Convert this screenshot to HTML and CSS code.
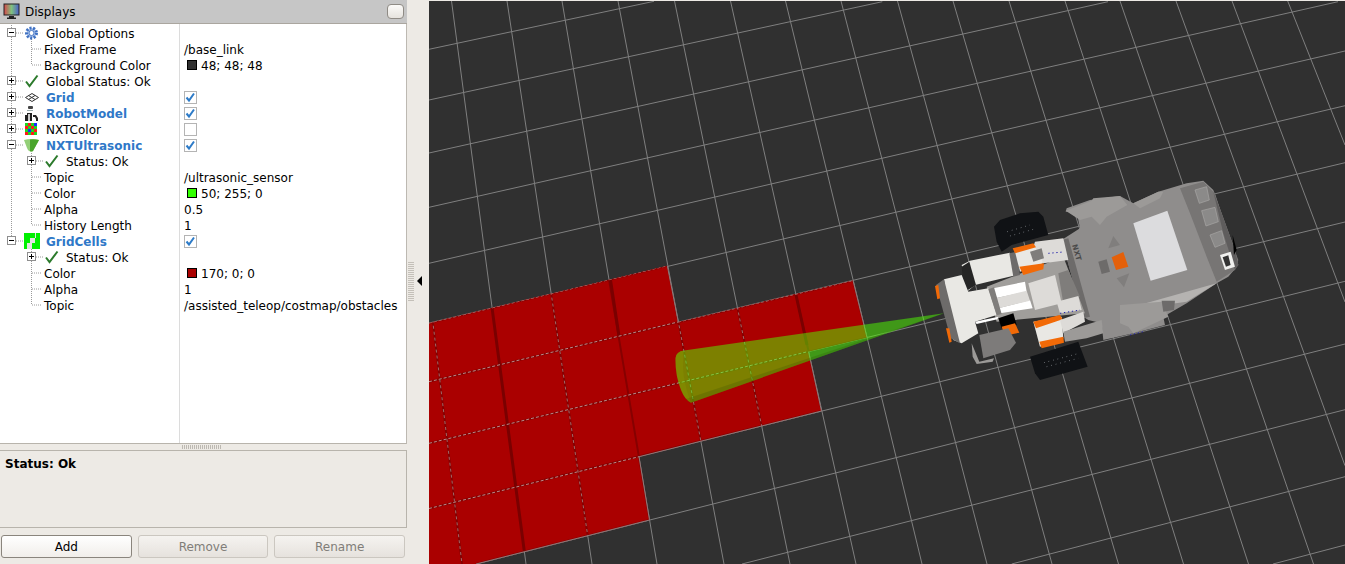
FILE: index.html
```html
<!DOCTYPE html>
<html lang="en">
<head>
<meta charset="utf-8">
<title>Displays</title>
<link rel="stylesheet" href="styles.css">
</head>
<body>
<div class="app">
  <aside class="sidebar">
    <header class="titlebar">
      <svg class="monitor" width="17" height="17" viewBox="0 0 17 17">
        <defs><linearGradient id="rainbow" x1="0" x2="1" y1="0" y2="0"><stop offset="0" stop-color="#d8474a"/><stop offset=".5" stop-color="#7fc27f"/><stop offset="1" stop-color="#4a5fc8"/></linearGradient></defs>
        <rect x="1" y="1" width="15" height="11" fill="url(#rainbow)" stroke="#222"/>
        <path d="M6 13h5v1.500h2V16H4v-1.500h2z" fill="#222"/>
      </svg>
      <span class="title">Displays</span>
      <span class="float-btn"></span>
    </header>

    <div class="tree">
      <svg class="guides" width="180" height="419" viewBox="0 24 180 419">
        <g class="dots">
          <path d="M11.500 25V237M31.500 39V65M31.500 153V225M31.500 249V305"/>
          <path d="M16 33H23M16 81H23M16 97H23M16 113H23M16 129H23M16 145H23M16 241H23"/>
          <path d="M32 49H42M32 65H42M36 161H43M32 177H42M32 193H42M32 209H42M32 225H42M36 257H43M32 273H42M32 289H42M32 305H42"/>
        </g>
        <g class="exp-box">
          <rect x="7.500" y="28.500" width="8" height="8"/><rect x="7.500" y="76.500" width="8" height="8"/><rect x="7.500" y="92.500" width="8" height="8"/><rect x="7.500" y="108.500" width="8" height="8"/><rect x="7.500" y="124.500" width="8" height="8"/><rect x="7.500" y="140.500" width="8" height="8"/><rect x="7.500" y="236.500" width="8" height="8"/><rect x="27.500" y="156.500" width="8" height="8"/><rect x="27.500" y="252.500" width="8" height="8"/>
        </g>
        <path class="exp-sign" d="M9 32.500h5M9 80.500h5M11.500 78v5M9 96.500h5M11.500 94v5M9 112.500h5M11.500 110v5M9 128.500h5M11.500 126v5M9 144.500h5M9 240.500h5M29 160.500h5M31.500 158v5M29 256.500h5M31.500 254v5"/>

        <circle class="gear-teeth" cx="31.500" cy="33" r="5"/>
        <circle class="gear-hub" cx="31.500" cy="33" r="2.500"/>

        <path class="check" d="M26 81.500l3.500 4.500L37.500 75.500"/>
        <path class="check" d="M46 161.500l3.500 4.500L57.500 155.500"/>
        <path class="check" d="M46 257.500l3.500 4.500L57.500 251.500"/>

        <path class="grid-icon" d="M25.500 97.500L32 93.500L38.500 97.500L32 101.500ZM28.500 95.500L35 99.500M35 95.500L28.500 99.500"/>

        <g>
          <rect x="28" y="106" width="5" height="3" rx="1" fill="#444"/>
          <rect x="27" y="110" width="6" height="1" fill="#9aa"/>
          <path d="M25 121v-6h2v-2h5v8zM33 115h3l2 3v3h-2v-2l-1-2h-2z" fill="#222"/>
          <path d="M28 114h2v7h-2z" fill="#ccc"/>
        </g>

        <g>
          <path class="c-g" d="M25 123h3v3h-3zM31 123h3v3h-3zM28 126h3v3h-3zM34 126h3v3h-3zM25 129h3v3h-3zM31 129h3v3h-3zM28 132h3v3h-3zM34 132h3v3h-3z"/>
          <path class="c-r" d="M28 123h3v3h-3zM25 126h3v3h-3zM31 126h3v3h-3zM34 129h3v3h-3zM25 132h3v3h-3zM31 132h3v3h-3z"/>
          <path class="c-b" d="M34 123h3v3h-3zM28 129h3v3h-3z"/>
        </g>

        <path class="cone-l" d="M24 140Q31 138 39 140L33 151Q29 153 27 148Z"/>
        <path class="cone-d" d="M30 139.500Q35 139 39 140L33 151Q31 152 30 151Z"/>

        <rect class="cells-bg" x="24" y="233" width="16" height="16"/>
        <path class="cells" d="M24 233h11v5H24zM36 233h4v5h-4zM24 238h6v5h-6zM35 238h5v5h-5zM24 243h3v6h-3zM32 243h8v6h-8z"/>
      </svg>

      <div class="row"><span class="name l0">Global Options</span></div>
      <div class="row"><span class="name l1">Fixed Frame</span><span class="val">/base_link</span></div>
      <div class="row"><span class="name l1">Background Color</span><span class="val"><i class="swatch sw-dark"></i>48; 48; 48</span></div>
      <div class="row"><span class="name l0">Global Status: Ok</span></div>
      <div class="row"><span class="name l0 on">Grid</span><span class="val"><i class="box"><svg width="13" height="13" viewBox="0 0 13 13"><path class="tick" d="M2.500 6.500l2.500 3L10 2.500"/></svg></i></span></div>
      <div class="row"><span class="name l0 on">RobotModel</span><span class="val"><i class="box"><svg width="13" height="13" viewBox="0 0 13 13"><path class="tick" d="M2.500 6.500l2.500 3L10 2.500"/></svg></i></span></div>
      <div class="row"><span class="name l0">NXTColor</span><span class="val"><i class="box"></i></span></div>
      <div class="row"><span class="name l0 on">NXTUltrasonic</span><span class="val"><i class="box"><svg width="13" height="13" viewBox="0 0 13 13"><path class="tick" d="M2.500 6.500l2.500 3L10 2.500"/></svg></i></span></div>
      <div class="row"><span class="name l2">Status: Ok</span></div>
      <div class="row"><span class="name l1">Topic</span><span class="val">/ultrasonic_sensor</span></div>
      <div class="row"><span class="name l1">Color</span><span class="val"><i class="swatch sw-green"></i>50; 255; 0</span></div>
      <div class="row"><span class="name l1">Alpha</span><span class="val">0.5</span></div>
      <div class="row"><span class="name l1">History Length</span><span class="val">1</span></div>
      <div class="row"><span class="name l0 on">GridCells</span><span class="val"><i class="box"><svg width="13" height="13" viewBox="0 0 13 13"><path class="tick" d="M2.500 6.500l2.500 3L10 2.500"/></svg></i></span></div>
      <div class="row"><span class="name l2">Status: Ok</span></div>
      <div class="row"><span class="name l1">Color</span><span class="val"><i class="swatch sw-red"></i>170; 0; 0</span></div>
      <div class="row"><span class="name l1">Alpha</span><span class="val">1</span></div>
      <div class="row"><span class="name l1">Topic</span><span class="val">/assisted_teleop/costmap/obstacles</span></div>
    </div>

    <div class="h-split"><span class="h-grip"></span></div>
    <div class="status"><b>Status: Ok</b></div>
    <div class="actions">
      <button class="btn btn-main" type="button">Add</button>
      <button class="btn" type="button" disabled>Remove</button>
      <button class="btn" type="button" disabled>Rename</button>
    </div>
  </aside>

  <div class="gutter">
    <span class="v-grip"></span>
    <span class="arrow"></span>
  </div>

  <main class="viewport">
    <svg class="scene" width="916" height="563" viewBox="429 1 916 563">
      <defs>
        <clipPath id="redclip"><path d="M429 323L667.300 265.700L678.300 322L853 280.500L867 337.600L808.500 351.600L821.500 411L639 456.700L649.500 520L476 564H429Z"/></clipPath>
      </defs>
      <rect x="429" y="1" width="916" height="563" class="bg"/>
      <g class="gridlines">
        <path d="M429 49.300L654 1.300M429 100L882.300 1.700M429 153L1108 1.700M429 207.300L1338 1.700M429 263.300L1345 51M429 323L1345 105.700M429 381.700L1345 162.700M429 443.300L1345 222M429 508.500L1345 281.300M476 564L1345 344M742 564L1345 409.700M1011.700 564L1345 476.700M1273 564L1345 545"/>
        <path d="M451.500 1L526 564M507 1L592 564M562 1L657 564M618 1L724 564M674.500 1L790 564M730.500 1L856 564M785.500 1L922 564M841 1L987 564M897.500 1L1052 564M953 1L1118.500 564M1009 1L1183.500 564M1065 1L1248.500 564M1120 1L1313.500 564M1176 1L1345 465.700M1232 1L1345 302M1287.700 1L1345 145"/>
      </g>
      <path class="red" d="M429 323L667.300 265.700L678.300 322L853 280.500L867 337.600L808.500 351.600L821.500 411L639 456.700L649.500 520L476 564H429Z"/>
      <g clip-path="url(#redclip)">
        <path class="seam" d="M429 323L667.300 265.700M678.300 322L853 280.500M429 381.700L853 280.500M429 443.300L867 337.600M429 508.500L821.500 411M476 564L649.500 520M562 1L657 564M618 1L724 564M674.500 1L790 564M507 1L592 564M429 290L462 564M785.500 1L922 564M730.500 1L856 564"/>
        <path class="seam-wide" d="M491 300L526 564M796 295L807 345M610.500 280L619 336"/>
        <path class="dash-h" d="M429 323L667.300 265.700M678.300 322L853 280.500M429 381.700L678 322M429 443.300L808 351.600M429 508.500L639 456.700"/>
        <path class="dash-v" d="M429 290L462 564M507 1L592 564M618 1L724 564M674.500 1L790 564"/>
      </g>
      <path class="edge" d="M639 456.700L821.500 411M476 564L649.500 520M667.300 265.700L678.300 322M853 280.500L867 337.600M808.500 351.600L821.500 411M639 456.700L649.500 520"/>

      <path class="cone" d="M944 313.300L684 350.500Q676 351.500 675.500 358Q675 375 681 390Q685 400 691 402.700Z"/>
      <path class="cone-band" d="M944 313.300L691 402.700Q688 401 686 399Z"/>
      <path class="cone-cap" d="M684 350.500Q676 351.500 675.500 358Q675 375 681 390Q685 400 691 402.700Q680 375 684 350.500Z"/>

      <g transform="translate(920 170) scale(.3333)">
        <path class="wheel" d="M222 170L240 150L300 130L355 125L370 140L385 195L275 225L245 245L230 215Z"/>
        <path class="wheel" d="M330 560L475 515L503 590L360 630L345 610Z"/>
        <path class="speck" d="M262 185L330 165M270 198L340 178M372 578L470 552M380 590L475 565"/>

        <path class="b-main" d="M425 210L480 175L470 125L437 125L440 115L510 90L600 78L640 100L715 65L800 40L850 32L880 60L905 130L945 240L955 285L925 320L890 340L800 400L765 420L730 440L735 465L640 490L550 510L545 460L505 450L490 440L450 300Z"/>
        <path class="b-light" d="M437 122L515 92L520 85L600 78L622 105L560 140L540 165L515 140L480 150Z"/>
        <path class="b-light" d="M640 100L715 65L730 65L720 85L660 115Z"/>
        <path class="b-band" d="M640 410L890 340L800 395L660 415Z"/>
        <path class="b-light" d="M600 405L725 395L745 440L640 490L625 470L600 460Z"/>
        <path class="b-dark" d="M725 392L765 392L762 420L730 425Z"/>
        <path class="b-dark" d="M425 210L445 205L510 440L490 445Z"/>
        <path class="b-panel" d="M780 55L850 35L885 70L910 150L955 270L945 300L890 335L860 260L810 130Z"/>
        <path class="b-outer" d="M880 65L905 130L945 240L955 285L945 300L910 190Z"/>
        <path class="b-port" d="M825 60L860 50L868 90L838 100ZM845 122L885 112L895 155L858 168ZM870 195L905 182L915 220L885 232Z"/>
        <path class="b-black" d="M938 195L950 240L942 255Z"/>
        <path class="b-usb" d="M900 255L932 245L945 290L915 300Z"/>
        <path class="b-usb-in" d="M908 262L925 256L932 285L918 290Z"/>
        <path class="screen" d="M640 160L742 122L802 300L692 332Z"/>
        <path class="orange-dark" d="M575 262L610 246L625 290L588 300Z"/>
        <path class="b-dark" d="M535 275L560 268L570 305L545 312Z"/>
        <path class="b-tri" d="M565 235L580 198L600 225ZM590 325L628 310L612 352Z"/>
        <text class="nxt" x="0" y="0" transform="translate(456 225) rotate(74)">NXT</text>

        <path class="under" d="M200 350L430 260L495 430L230 455Z"/>
        <path class="rod" d="M345 215L430 205L445 270L370 280L335 245Z"/>
        <path class="rod" d="M325 340L405 315L425 400L345 420Z"/>
        <path class="b-grey" d="M415 310L445 300L480 380L430 400Z"/>
        <path class="rod" d="M410 395L475 378L485 420L420 430Z"/>
        <path class="white" d="M125 285L150 272L270 248L290 315L205 335L165 345L145 362Z"/>
        <path class="b-black2" d="M125 290L148 275L168 345L140 362L130 340Z"/>
        <path class="b-dark" d="M268 250L290 245L300 315L280 320Z"/>
        <path class="pure" d="M220 355L315 335L320 365L225 385ZM235 415L330 390L338 415L240 430Z"/>
        <path class="rod" d="M228 385L320 362L330 392L235 415Z"/>
        <path class="white" d="M72 328L125 315L145 365L205 355L230 435L165 455L175 490L125 520L100 510Z"/>
        <path class="b-dark" d="M48 345L72 328L120 520L92 505Z"/>
        <path class="b-grey" d="M205 358L222 352L245 432L230 436Z"/>
        <path class="orange" d="M45 348L55 345L60 385L52 388ZM78 475L88 475L95 515L88 518Z"/>
        <path class="white" d="M285 245L345 230L370 280L300 305Z"/>
        <path class="orange" d="M278 235L340 220L348 232L285 250ZM298 290L372 280L370 298L310 315Z"/>
        <path class="b-grey" d="M330 245L365 235L372 265L340 275Z"/>
        <path class="blue-dots" d="M385 250L430 246M420 430L480 420M630 495L670 485"/>
        <path class="b-black3" d="M235 445L280 430L290 465L245 475Z"/>
        <path class="orange" d="M245 470L285 460L298 488L255 497Z"/>
        <path class="pure" d="M165 455L235 440L232 448L170 462Z"/>
        <path class="b-light" d="M155 520L178 575L222 565L218 575L170 582L158 560Z"/>
        <path class="sensor" d="M178 495L265 475L288 518L270 540L190 565Z"/>
        <path class="white" d="M340 455L425 440L430 505L360 530Z"/>
        <path class="orange" d="M340 455L420 435L428 448L348 475ZM358 515L430 500L432 518L365 535Z"/>
        <path class="rod" d="M420 450L490 425L495 455L430 490Z"/>
        <path class="b-light" d="M430 485L545 450L550 490L500 505L435 515Z"/>
      </g>
    </svg>
  </main>
</div>
</body>
</html>
```

FILE: styles.css
```css
* { box-sizing: border-box; }

html, body {
  margin: 0;
  padding: 0;
  height: 100%;
  overflow: hidden;
}

body {
  background: #edeae5;
  color: #000;
  font: 12px/16px "DejaVu Sans", sans-serif;
}

.app {
  display: flex;
  width: 1345px;
  height: 564px;
}

/* Left dock */
.sidebar {
  flex: 0 0 407px;
  display: flex;
  flex-direction: column;
}

.titlebar {
  flex: 0 0 24px;
  display: flex;
  align-items: center;
  gap: 5px;
  padding: 0 2px 1px 3px;
  background: #c6c6c6;
  border-bottom: 1px solid #aaa69f;
}

.monitor { flex: none; margin-top: 1px; }

.title { flex: 1; margin-top: 2px; }

.float-btn {
  width: 17px;
  height: 15px;
  margin-right: 1px;
  border: 1px solid #8f8b85;
  border-radius: 4px;
  background: linear-gradient(#fbfaf8, #e6e3de);
}

.tree {
  position: relative;
  flex: 0 0 420px;
  padding-top: 1px;
  background: linear-gradient(#dcdcdc, #dcdcdc) 179px 0 / 1px 100% no-repeat, #fff;
  border-right: 1px solid #bdb9b2;
  border-bottom: 1px solid #b8b4ac;
}

.guides {
  position: absolute;
  top: 0;
  left: 0;
}

.row {
  display: flex;
  height: 16px;
  white-space: nowrap;
}

.name { flex: 0 0 184px; padding-top: 1px; }
.l0 { padding-left: 46px; }
.l1 { padding-left: 44px; }
.l2 { padding-left: 66px; }
.on { color: #2f78c8; font-weight: bold; }

.val {
  display: flex;
  align-items: flex-start;
  padding-top: 1px;
}

.swatch {
  flex: none;
  width: 10px;
  height: 10px;
  margin: 2px 4px 0 3px;
  border: 1px solid #000;
}
.sw-dark { background: #303030; }
.sw-green { background: #32ff00; }
.sw-red { background: #aa0000; }

.box {
  display: block;
  width: 13px;
  height: 13px;
  margin-top: 1px;
  border: 1px solid #b4b4b4;
  background: #fff;
  overflow: visible;
}
.box svg { display: block; margin: -1px; }

.tick {
  fill: none;
  stroke: #2d7bc8;
  stroke-width: 2;
}

/* Tree decorations */
.dots path {
  fill: none;
  stroke: #9a9a9a;
  stroke-width: 1;
  stroke-dasharray: 1 1;
}

.exp-box rect { fill: #fff; stroke: #8e8e8e; }
.exp-sign { fill: none; stroke: #000; stroke-width: 1; }

.gear-teeth {
  fill: #a9c1ea;
  stroke: #3f71c2;
  stroke-width: 3;
  stroke-dasharray: 2 1.500;
}
.gear-hub { fill: #fff; stroke: #4d7cc6; }

.check {
  fill: none;
  stroke: #2b7a2b;
  stroke-width: 2;
}

.grid-icon { fill: none; stroke: #333; stroke-width: 1; }

.c-r { fill: #ff1a1a; }
.c-g { fill: #1ed81e; }
.c-b { fill: #1a2cff; }

.cone-l { fill: #93cf78; }
.cone-d { fill: #4aa52c; }

.cells-bg { fill: #e4e4e4; }
.cells { fill: #00f000; }

/* Split handles */
.h-split {
  flex: 0 0 6px;
  display: flex;
  justify-content: center;
  padding: 1px 4px 1px 0;
}

.h-grip {
  width: 40px;
  height: 4px;
  background: repeating-linear-gradient(90deg, #bdb9b2 0 1px, transparent 1px 2px);
}

.status {
  flex: 0 0 78px;
  padding: 5px;
  background: #edeae5;
  border: 1px solid #b8b4ac;
  border-left: 0;
}

.actions {
  flex: 1;
  display: flex;
  gap: 6px;
  padding: 7px 2px 0 1px;
}

.btn {
  flex: 1;
  height: 23px;
  padding: 0;
  border: 1px solid #cbc7c0;
  border-radius: 3px;
  background: linear-gradient(#f5f3f0, #e6e2dd);
  color: #807d78;
  font: 12px "DejaVu Sans", sans-serif;
}

.btn-main {
  border-color: #8a857d;
  background: linear-gradient(#fff, #f1eeea);
  color: #000;
}

/* Gutter between dock and view */
.gutter {
  position: relative;
  flex: 0 0 22px;
}

.v-grip {
  position: absolute;
  left: 1px;
  top: 262px;
  width: 6px;
  height: 40px;
  background: repeating-linear-gradient(#c4c0b9 0 1px, transparent 1px 2px);
}

.arrow {
  position: absolute;
  left: 10px;
  top: 276px;
  border-style: solid;
  border-width: 5px 5px 5px 0;
  border-color: transparent #000 transparent transparent;
}

/* 3D view */
.viewport {
  flex: 1;
  padding-top: 1px;
  overflow: hidden;
}

.scene { display: block; }

.bg { fill: #303030; }

.gridlines path {
  fill: none;
  stroke: #7f7f7f;
  stroke-width: 1;
}

.red { fill: #aa0000; }

.seam {
  fill: none;
  stroke: #860000;
  stroke-width: 2;
}

.seam-wide {
  fill: none;
  stroke: #7a0000;
  stroke-width: 3;
}

.dash-h {
  fill: none;
  stroke: #b98a8a;
  stroke-width: 1;
  stroke-dasharray: 3 2;
}

.dash-v {
  fill: none;
  stroke: #a06868;
  stroke-width: 1;
  stroke-dasharray: 3 3;
}

.edge {
  fill: none;
  stroke: #8f7a7a;
  stroke-width: 1;
}

.cone { fill: rgba(80, 255, 0, .5); }
.cone-band { fill: rgba(40, 60, 0, .18); }
.cone-cap { fill: rgba(150, 170, 0, .18); }

/* Robot */
.wheel { fill: #101215; }
.speck { fill: none; stroke: #8b8f94; stroke-width: 3; stroke-dasharray: 2 12; }
.under { fill: #a09e9b; }
.b-main { fill: #8f8d8c; }
.b-light { fill: #9c9a98; }
.b-band { fill: #b5b3b1; }
.b-dark { fill: #6d6b6a; }
.b-grey { fill: #7f7d7b; }
.b-panel { fill: #777574; }
.b-outer { fill: #5f5d5d; }
.b-port { fill: #8b8a89; stroke: #a9a8a6; stroke-width: 2; }
.b-black { fill: #000; }
.b-black2 { fill: #252525; }
.b-black3 { fill: #000; }
.b-usb { fill: #f0f0ee; }
.b-usb-in { fill: #333; }
.b-tri { fill: #807e7d; }
.screen { fill: #dcdcde; }
.orange-dark { fill: #e4600a; }
.orange { fill: #f26a07; }
.rod { fill: #dddbd8; }
.white { fill: #e9e8e4; }
.pure { fill: #fff; }
.sensor { fill: #7d7b7a; }
.blue-dots { fill: none; stroke: #2222aa; stroke-width: 3; stroke-dasharray: 4 8; }
.nxt { fill: #4a4a4a; font: bold 22px "DejaVu Sans", sans-serif; }
```
